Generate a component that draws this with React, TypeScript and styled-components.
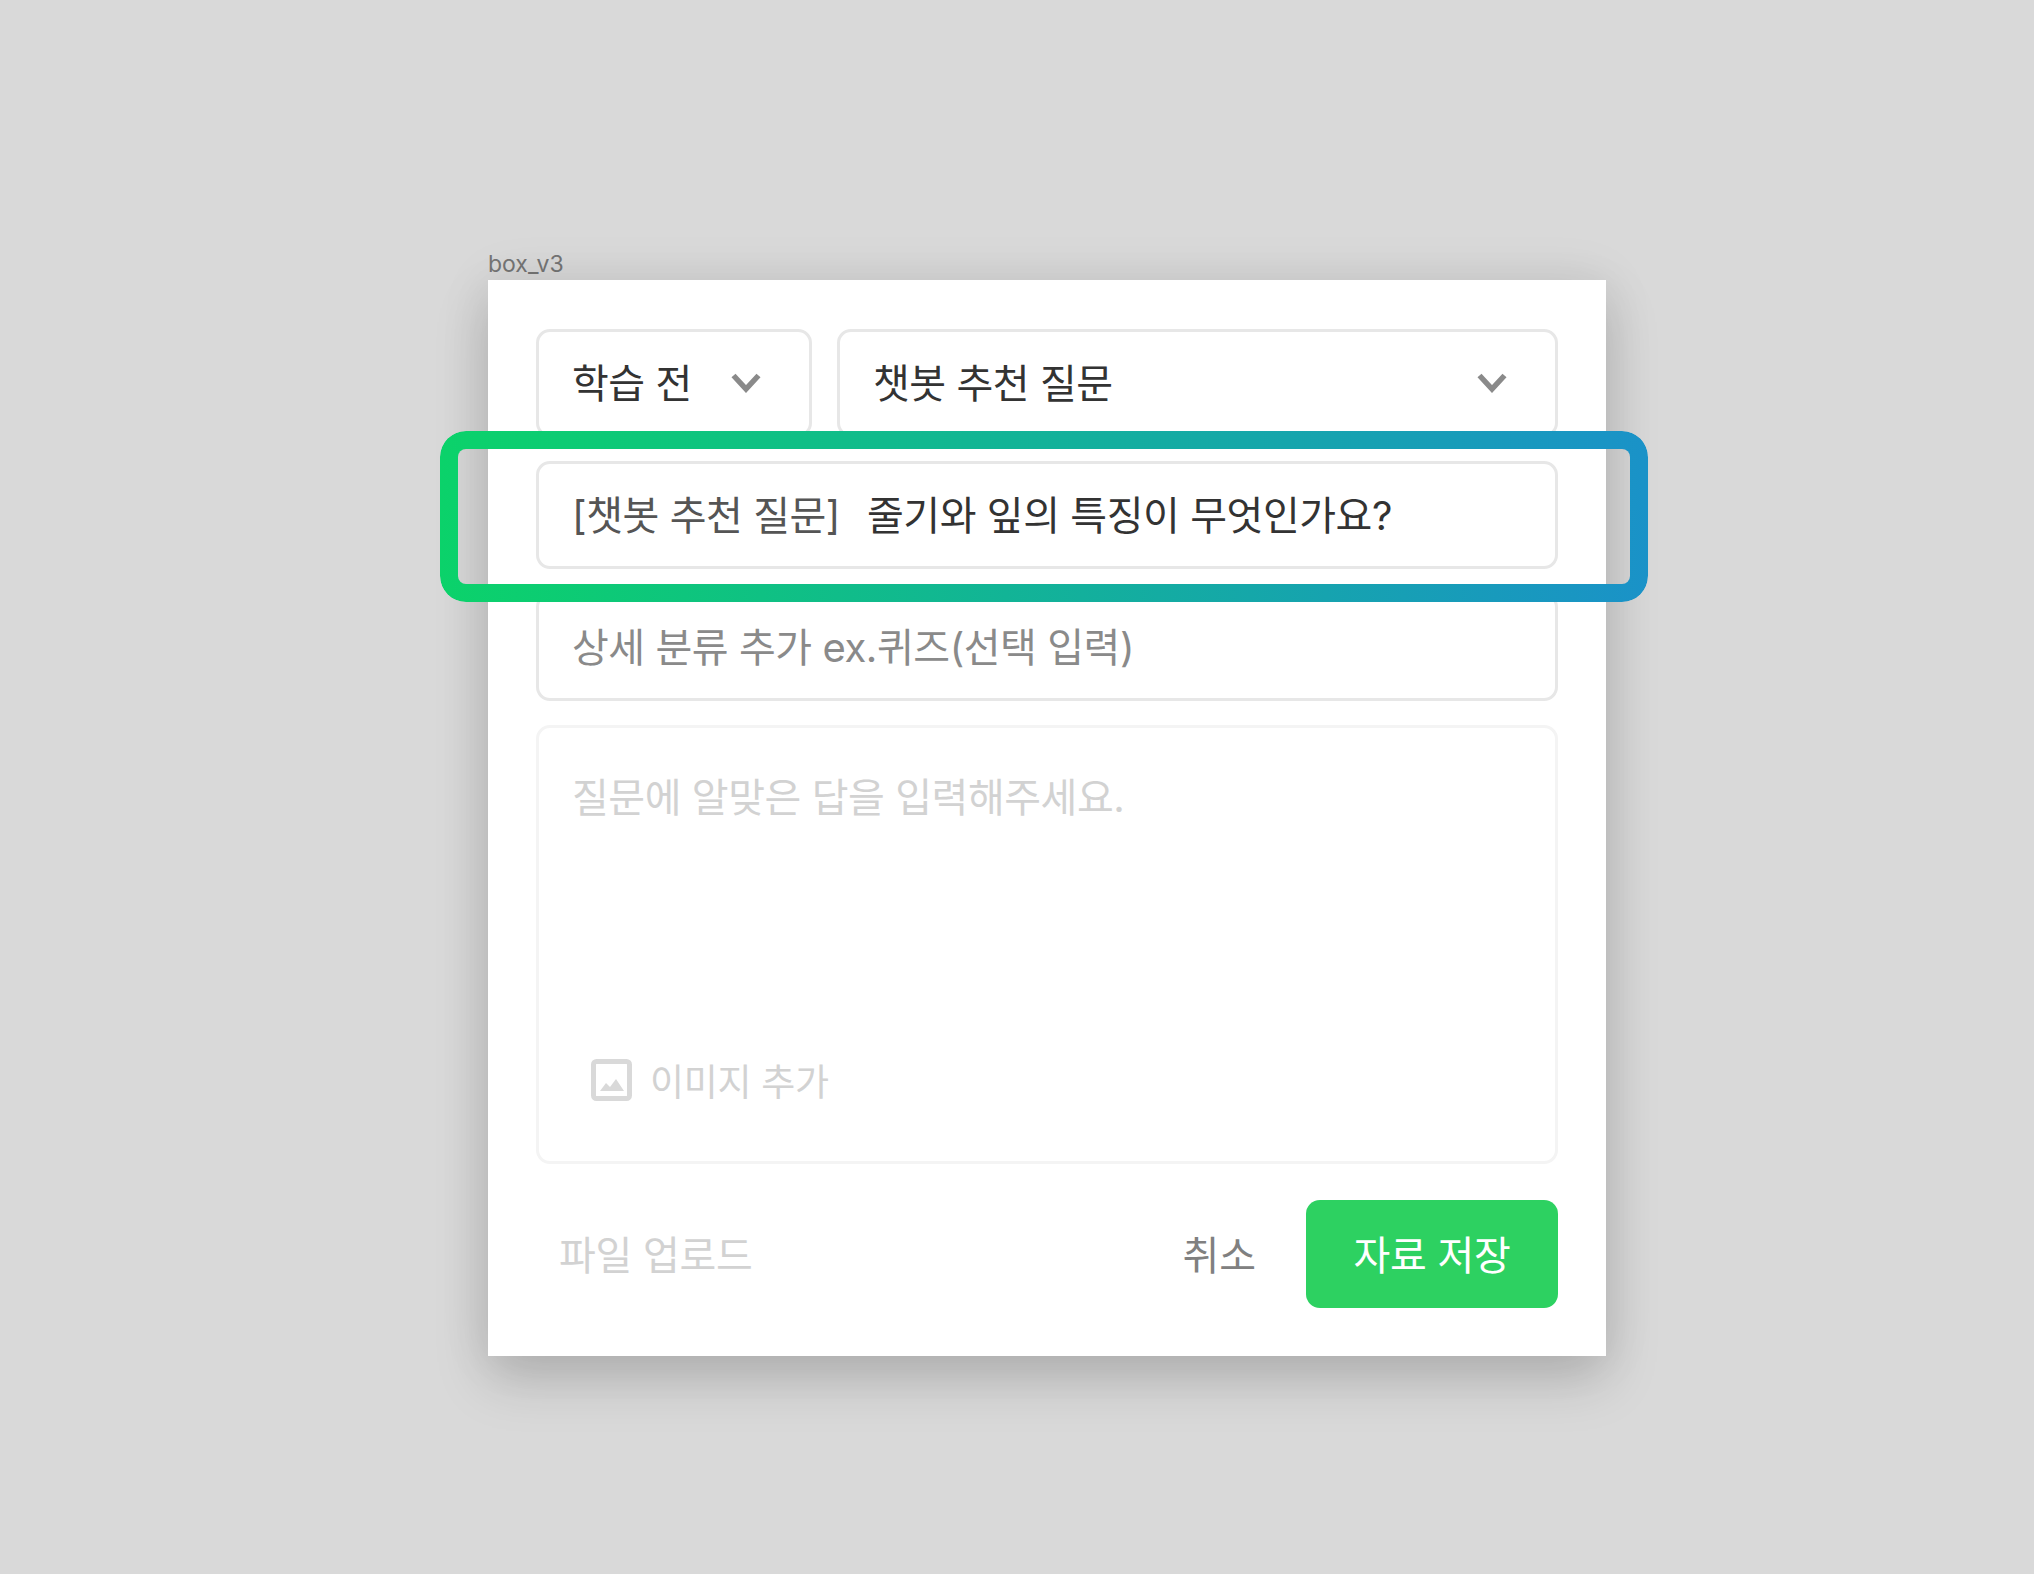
import styled, { createGlobalStyle } from 'styled-components';

const GlobalStyle = createGlobalStyle`
  * {
    box-sizing: border-box;
  }
  html,
  body {
    margin: 0;
    padding: 0;
    background: #d9d9d9;
  }
  body {
    font-family: 'Inter', 'Noto Sans CJK KR', sans-serif;
  }
`;

const Page = styled.div`
  width: 2034px;
  height: 1574px;
  padding: 250px 0 0 488px;
  overflow: hidden;
`;

const FrameLabel = styled.div`
  height: 30px;
  font-size: 23px;
  line-height: 28px;
  color: #757575;
`;

const Card = styled.div`
  position: relative;
  width: 1118px;
  height: 1076px;
  padding: 49px 48px 48px;
  display: flex;
  flex-direction: column;
  gap: 24px;
  background: #fff;
  box-shadow: 0 24px 50px rgba(0, 0, 0, 0.17), 0 0 50px rgba(0, 0, 0, 0.08);
`;

const SelectRow = styled.div`
  display: flex;
  gap: 25px;
`;

const Field = styled.div<{ $muted?: boolean }>`
  height: 108px;
  padding: 0 33px 5px;
  display: flex;
  align-items: center;
  font-size: 40px;
  letter-spacing: -0.45px;
  color: ${(p) => (p.$muted ? '#8a8a8a' : '#333')};
  background: #fff;
  border: 3px solid #e7e7e7;
  border-radius: 14px;
`;

const Select = styled(Field)<{ $grow?: boolean }>`
  justify-content: space-between;
  padding-right: 48px;
  color: #333;
  ${(p) => (p.$grow ? 'flex: 1;' : 'width: 276px;')}
`;

const Prefix = styled.span`
  margin-right: 27px;
  color: #555;
`;

const ChevronIcon = styled.svg`
  margin-top: 5px;
`;

const Chevron = () => (
  <ChevronIcon width="30" height="20" viewBox="0 0 30 20" fill="none">
    <path d="M2.5 2.5 15 16 27.5 2.5" stroke="#8a8a8a" strokeWidth="5.5" />
  </ChevronIcon>
);

const AnswerBox = styled.div`
  height: 439px;
  padding: 48px 33px 60px;
  display: flex;
  flex-direction: column;
  justify-content: space-between;
  border: 3px solid #f4f4f4;
  border-radius: 14px;
`;

const Placeholder = styled.div`
  font-size: 40px;
  line-height: 44px;
  letter-spacing: -0.45px;
  color: #d2d2d2;
`;

const ImageButton = styled.div`
  height: 42px;
  margin-left: 19px;
  display: flex;
  align-items: center;
  gap: 18px;
  font-size: 37px;
  letter-spacing: -0.3px;
  color: #d2d2d2;
`;

const ImageIcon = () => (
  <svg width="41" height="42" viewBox="0 0 41 42" fill="none">
    <rect x="2.5" y="2.5" width="36" height="37" rx="3" stroke="#d9d9d9" strokeWidth="5" />
    <path d="M9 32 15 24 19 28 25 20 33 32Z" fill="#d9d9d9" />
  </svg>
);

const Footer = styled.div`
  margin-top: 12px;
  display: flex;
  align-items: center;
`;

const UploadLabel = styled.div`
  margin-left: 23px;
  margin-right: auto;
  padding-bottom: 2px;
  font-size: 40px;
  letter-spacing: -0.3px;
  color: #d2d2d2;
`;

const CancelButton = styled.button`
  margin-right: 50px;
  padding: 0 0 2px;
  border: none;
  background: none;
  font: inherit;
  font-size: 40px;
  color: #808080;
`;

const SaveButton = styled.button`
  width: 252px;
  height: 108px;
  padding: 0 0 2px;
  border: none;
  border-radius: 14px;
  background: #2dd161;
  font: inherit;
  font-size: 40px;
  letter-spacing: -0.3px;
  color: #fff;
`;

// gradient ring laid over the second row, cut out with a mask
const Highlight = styled.div`
  position: absolute;
  left: -48px;
  top: 151px;
  width: 1208px;
  height: 171px;
  padding: 18px;
  border-radius: 26px;
  background: linear-gradient(90deg, #0bd26a 0%, #1a92c8 100%);
  -webkit-mask: linear-gradient(#fff 0 0) content-box, linear-gradient(#fff 0 0);
  -webkit-mask-composite: xor;
  mask-composite: exclude;
`;

export default function App() {
  return (
    <>
      <GlobalStyle />
      <Page>
        <FrameLabel>box_v3</FrameLabel>
        <Card>
          <SelectRow>
            <Select>
              학습 전
              <Chevron />
            </Select>
            <Select $grow>
              챗봇 추천 질문
              <Chevron />
            </Select>
          </SelectRow>
          <Field>
            <Prefix>[챗봇 추천 질문]</Prefix>
            줄기와 잎의 특징이 무엇인가요?
          </Field>
          <Field $muted>상세 분류 추가 ex.퀴즈(선택 입력)</Field>
          <AnswerBox>
            <Placeholder>질문에 알맞은 답을 입력해주세요.</Placeholder>
            <ImageButton>
              <ImageIcon />
              이미지 추가
            </ImageButton>
          </AnswerBox>
          <Footer>
            <UploadLabel>파일 업로드</UploadLabel>
            <CancelButton>취소</CancelButton>
            <SaveButton>자료 저장</SaveButton>
          </Footer>
          <Highlight />
        </Card>
      </Page>
    </>
  );
}
